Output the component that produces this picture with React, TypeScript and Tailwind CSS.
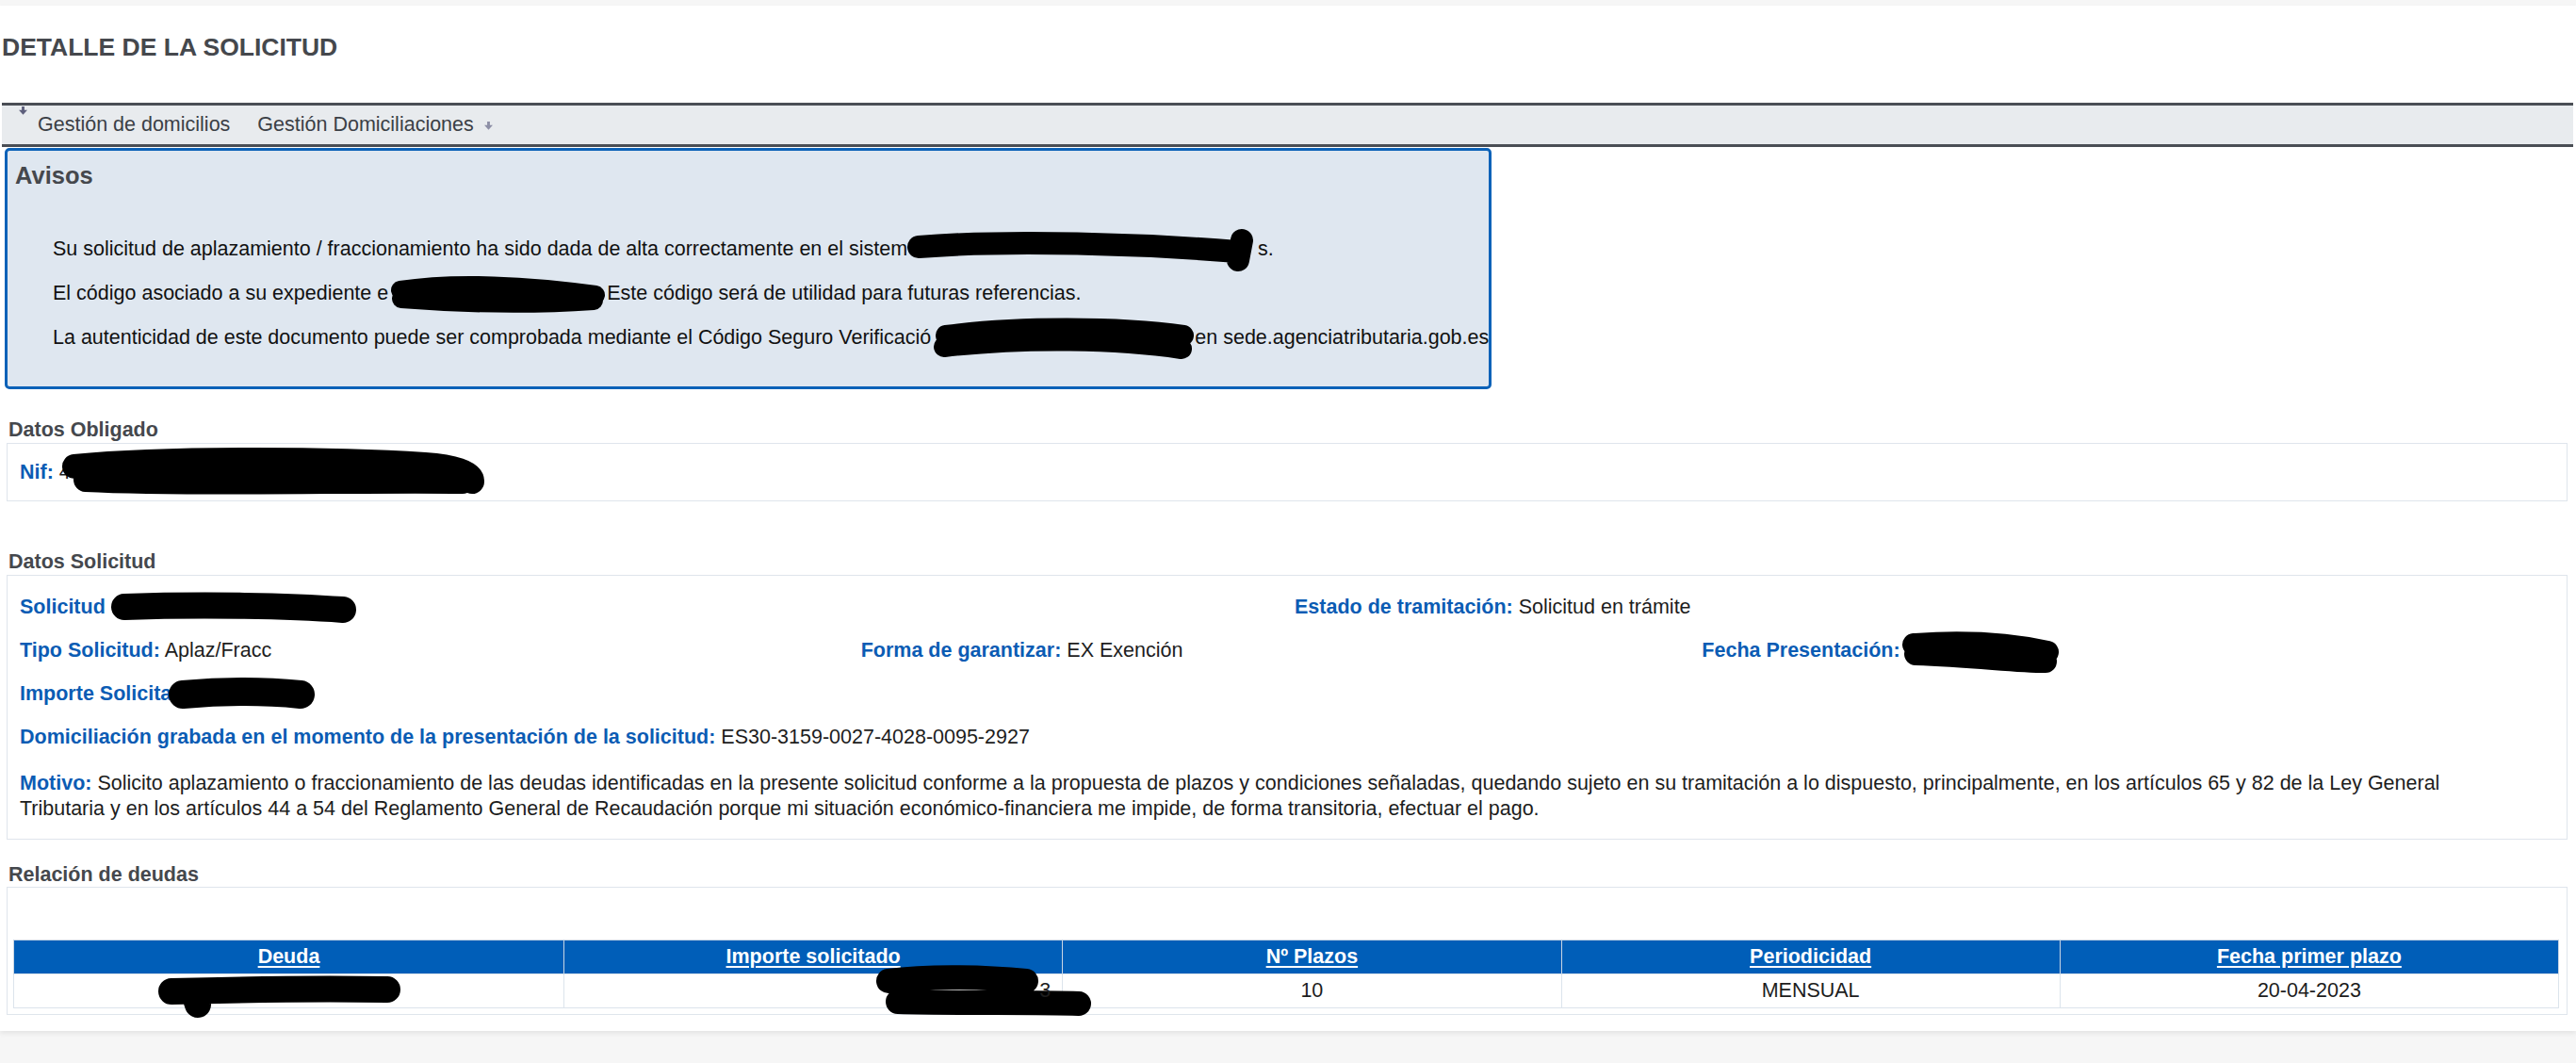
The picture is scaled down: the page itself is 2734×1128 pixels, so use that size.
import React from 'react'

// marker strokes used to hide personal data in the original capture
function Blot({ w, h, d, sw = 26, className = '' }: { w: number; h: number; d: string; sw?: number; className?: string }) {
  return (
    <svg width={w} height={h} viewBox={`0 0 ${w} ${h}`} overflow="visible" className={`inline-block align-middle ${className}`}>
      <path d={d} fill="none" stroke="#000" strokeWidth={sw} strokeLinecap="round" strokeLinejoin="round" />
    </svg>
  )
}

function MenuArrow({ className }: { className: string }) {
  return (
    <svg viewBox="0 0 10 10" className={className}>
      <path d="M3.4 0h3.2v4.2H10L5 9.6 0 4.2h3.4z" fill="currentColor" />
    </svg>
  )
}

function Label({ children }: { children: React.ReactNode }) {
  return <span className="font-bold text-[#0b5cb4]">{children}</span>
}

function SectionTitle({ children, className }: { children: React.ReactNode; className: string }) {
  return <h2 className={`pl-[9px] text-[21.5px] leading-[25px] font-bold text-[#45484d] ${className}`}>{children}</h2>
}

export default function App() {
  const deudas = [{ plazos: '10', periodicidad: 'MENSUAL', fecha: '20-04-2023' }]

  return (
    <div className="min-h-screen bg-[#f6f6f6] pt-[6px] font-['Liberation_Sans',Arial,sans-serif] text-[21.5px] leading-[25px] text-[#1d1d1d]">
      <div className="bg-white pb-[17px] shadow-[0_3px_5px_rgba(0,0,0,0.07)]">
        <h1 className="pl-[2px] pt-[29px] text-[26.5px] leading-[30px] font-bold text-[#45484d]">DETALLE DE LA SOLICITUD</h1>

        {/* menu */}
        <div className="relative mt-[44px] ml-[2px] mr-[3px] flex h-[47px] items-center border-y-[3px] border-[#4a4e55] bg-[#e8ebee] pl-[38px] text-[#3b4046]">
          <MenuArrow className="absolute left-[18px] top-[1px] h-[9px] w-[9px] text-[#5d5f7c]" />
          <span>Gestión de domicilios</span>
          <span className="ml-[29px]">Gestión Domiciliaciones</span>
          <MenuArrow className="ml-[11px] mt-[2px] h-[9px] w-[9px] text-[#8d8fa6]" />
        </div>

        {/* avisos */}
        <div className="mt-[1px] ml-[5px] w-[1578px] rounded-[5px] border-[3px] border-[#0c62b8] bg-[#dfe7f0] pl-[8px]">
          <h2 className="pt-[11px] text-[25.5px] leading-[30px] font-bold text-[#45484d]">Avisos</h2>
          <div className="flex flex-col gap-[22px] pt-[51px] pb-[39px] pl-[40px] text-[#111]">
            <p className="whitespace-nowrap">
              Su solicitud de aplazamiento / fraccionamiento ha sido dada de alta correctamente en el sistem
              <Blot w={372} h={40} className="-my-[20px]" d="M12 17 C110 9 250 14 350 22 M355 10 L351 31" sw={24} />
              s.
            </p>
            <p className="whitespace-nowrap">
              El código asociado a su expediente e
              <Blot w={232} h={38} className="-my-[19px]" d="M13 15 C70 6 150 10 220 20 M14 24 C90 30 160 30 218 26" sw={20} />
              Este código será de utilidad para futuras referencias.
            </p>
            <p className="whitespace-nowrap">
              La autenticidad de este documento puede ser comprobada mediante el Código Seguro Verificació
              <Blot w={280} h={38} className="-my-[19px]" d="M16 16 C90 6 200 6 268 16 M14 28 C100 18 200 20 266 30" sw={22} />
              en sede.agenciatributaria.gob.es
            </p>
          </div>
        </div>

        {/* datos obligado */}
        <SectionTitle className="mt-[31px]">Datos Obligado</SectionTitle>
        <div className="mt-[1px] ml-[7px] mr-[9px] border border-[#dfe5ec] px-[13px] pt-[18px] pb-[17px]">
          <Label>Nif:</Label> 4
          <Blot w={460} h={50} className="-my-[25px] -ml-[14px]" d="M18 18 C120 8 300 10 390 16 C420 18 440 24 440 34 M30 32 C150 38 330 32 430 34" sw={26} />
        </div>

        {/* datos solicitud */}
        <SectionTitle className="mt-[52px]">Datos Solicitud</SectionTitle>
        <div className="mt-[1px] ml-[7px] mr-[9px] flex flex-col gap-[21px] border border-[#dfe5ec] px-[13px] pt-[21px] pb-[18px]">
          <div className="grid grid-cols-2">
            <div className="whitespace-nowrap">
              <Label>Solicitud</Label>{' '}
              <Blot w={259} h={32} className="-my-[16px]" d="M14 15 C100 12 190 14 246 18" sw={28} />
            </div>
            <div className="pl-[8px]">
              <Label>Estado de tramitación:</Label> Solicitud en trámite
            </div>
          </div>
          <div className="grid grid-cols-3">
            <div>
              <Label>Tipo Solicitud:</Label> Aplaz/Fracc
            </div>
            <div className="-ml-[4px]">
              <Label>Forma de garantizar:</Label> EX Exención
            </div>
            <div className="-ml-[8px] whitespace-nowrap">
              <Label>Fecha Presentación:</Label>
              <Blot w={172} h={42} className="-my-[21px]" d="M14 14 C70 10 120 14 156 22 M16 24 C80 26 120 32 154 32" sw={24} />
            </div>
          </div>
          <div className="whitespace-nowrap">
            <Label>Importe Solicita</Label>
            <Blot w={155} h={32} className="-my-[16px] -ml-[3px]" d="M15 16 C60 12 100 12 140 16" sw={30} />
          </div>
          <div>
            <Label>Domiciliación grabada en el momento de la presentación de la solicitud:</Label> ES30-3159-0027-4028-0095-2927
          </div>
          <div className="mt-[2px] pr-[40px] leading-[27px]">
            <Label>Motivo:</Label> Solicito aplazamiento o fraccionamiento de las deudas identificadas en la presente solicitud conforme a la propuesta de plazos y condiciones señaladas, quedando sujeto en su tramitación a lo dispuesto, principalmente, en los artículos 65 y 82 de la Ley General Tributaria y en los artículos 44 a 54 del Reglamento General de Recaudación porque mi situación económico-financiera me impide, de forma transitoria, efectuar el pago.
          </div>
        </div>

        {/* relacion de deudas */}
        <SectionTitle className="mt-[25px]">Relación de deudas</SectionTitle>
        <div className="ml-[7px] mr-[9px] border border-[#dfe5ec] pl-[6px] pr-[8px] pt-[55px] pb-[6px]">
          <table className="w-full table-fixed border-collapse">
            <colgroup>
              <col className="w-[584px]" />
              <col />
              <col />
              <col />
              <col />
            </colgroup>
            <thead>
              <tr className="h-[36px] bg-[#005eb8] text-white">
                {['Deuda', 'Importe solicitado', 'Nº Plazos', 'Periodicidad', 'Fecha primer plazo'].map(h => (
                  <th key={h} className="border-x border-t border-[#c9d6e4] font-bold underline underline-offset-[3px]">{h}</th>
                ))}
              </tr>
            </thead>
            <tbody>
              {deudas.map((d, i) => (
                <tr key={i} className="h-[36px] text-center text-[#1d1d1d]">
                  <td className="border border-[#dce4ec]">
                    <Blot w={257} h={32} className="-my-[16px] -ml-[20px]" d="M14 16 C90 14 180 13 243 14 M40 24 L42 30" sw={28} />
                  </td>
                  <td className="border border-[#dce4ec] pr-[12px] text-right">
                    <Blot w={178} h={50} className="-my-[25px] mr-[-4px]" d="M14 14 C60 8 120 10 160 14 M24 36 C90 38 170 36 216 38" sw={26} />
                    3
                  </td>
                  <td className="border border-[#dce4ec]">{d.plazos}</td>
                  <td className="border border-[#dce4ec]">{d.periodicidad}</td>
                  <td className="border border-[#dce4ec]">{d.fecha}</td>
                </tr>
              ))}
            </tbody>
          </table>
        </div>
      </div>
    </div>
  )
}
